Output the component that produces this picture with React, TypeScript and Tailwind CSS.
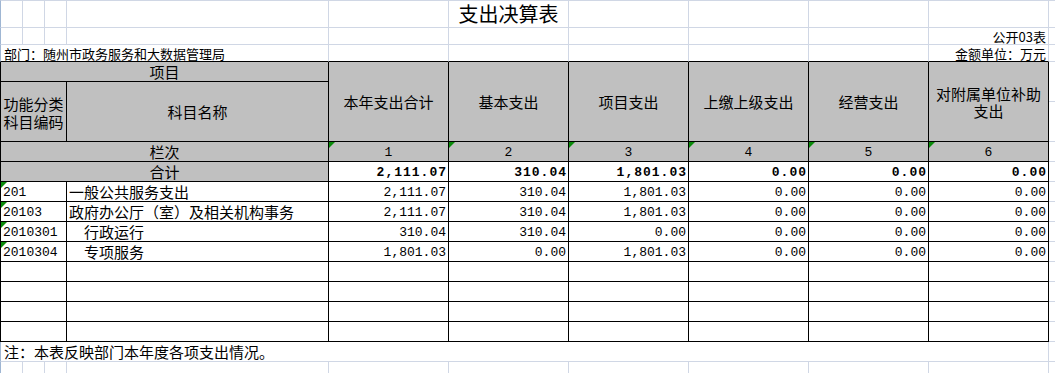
import React from 'react'

const CJK = "font-['Noto_Sans_CJK_SC','Noto_Sans',sans-serif]"
const MONO = "font-['Liberation_Mono','DejaVu_Sans_Mono',monospace]"

// column widths A..J (A includes the sheet's left border)
const colW = [
  'w-[23px]',
  'w-[22px]',
  'w-[22px]',
  'w-[262px]',
  'w-[120px]',
  'w-[120px]',
  'w-[120px]',
  'w-[120px]',
  'w-[120px]',
  'w-[120px]',
]

const heads = ['本年支出合计', '基本支出', '项目支出', '上缴上级支出', '经营支出']

const rows = [
  { code: '201', name: '一般公共服务支出', indent: false, vals: ['2,111.07', '310.04', '1,801.03', '0.00', '0.00', '0.00'] },
  { code: '20103', name: '政府办公厅（室）及相关机构事务', indent: false, vals: ['2,111.07', '310.04', '1,801.03', '0.00', '0.00', '0.00'] },
  { code: '2010301', name: '行政运行', indent: true, vals: ['310.04', '310.04', '0.00', '0.00', '0.00', '0.00'] },
  { code: '2010304', name: '专项服务', indent: true, vals: ['1,801.03', '0.00', '1,801.03', '0.00', '0.00', '0.00'] },
]

const totals = ['2,111.07', '310.04', '1,801.03', '0.00', '0.00', '0.00']

const Tri = () => (
  <svg className="absolute left-0 top-0" width="6" height="6" viewBox="0 0 6 6">
    <polygon points="0,0 6,0 0,6" fill="#0a8a0a" />
  </svg>
)

const Margin = ({ h }: { h: string }) => (
  <div className={`flex-1 ${h} border-b border-[#d0d7e5]`} />
)

export default function App() {
  return (
    <div className={`w-[1055px] h-[373px] overflow-hidden bg-white text-black ${CJK}`}>
      {/* row 1: title */}
      <div className="flex h-[28px]">
        {colW.map((w, i) => (
          <div
            key={i}
            className={`${w} h-full border-t border-b border-r border-[#d0d7e5] ${i === 0 ? 'border-l border-l-[#9fb6d3]' : ''} flex items-center justify-center`}
          >
            {i === 5 && <span className="text-[20px] leading-none whitespace-nowrap">支出决算表</span>}
          </div>
        ))}
        <div className="flex-1 border-t border-b border-[#d0d7e5]" />
      </div>

      {/* row 2 */}
      <div className="flex h-[17px]">
        {colW.map((w, i) => (
          <div
            key={i}
            className={`${w} h-full border-b border-r border-[#d0d7e5] ${i === 0 ? 'border-l border-l-[#9fb6d3]' : ''} flex items-center justify-end pr-[2px]`}
          >
            {i === 9 && <span className="text-[13px] leading-none whitespace-nowrap">公开03表</span>}
          </div>
        ))}
        <Margin h="h-full" />
      </div>

      {/* row 3 */}
      <div className="flex h-[17px]">
        <div className="w-[329px] h-full border-l border-l-[#9fb6d3] border-r border-r-[#d0d7e5] border-b border-b-black flex items-center pl-[3px]">
          <span className="text-[13px] leading-none whitespace-nowrap">部门：随州市政务服务和大数据管理局</span>
        </div>
        {colW.slice(4).map((w, i) => (
          <div
            key={i}
            className={`${w} h-full border-r border-r-[#d0d7e5] border-b border-b-black flex items-center justify-end pr-[2px]`}
          >
            {i === 5 && <span className="text-[13px] leading-none whitespace-nowrap">金额单位：万元</span>}
          </div>
        ))}
        <Margin h="h-full" />
      </div>

      {/* header block */}
      <div className="flex h-[80px] text-[15px]">
        <div className="w-[329px] flex flex-col bg-[#c0c0c0]">
          <div className="h-[20px] border-l border-r border-b border-black flex items-center justify-center leading-none">
            项目
          </div>
          <div className="flex h-[60px]">
            <div className="w-[67px] border-l border-r border-b border-black flex flex-col items-center justify-center gap-[3px] pt-[1px] leading-none">
              <span>功能分类</span>
              <span>科目编码</span>
            </div>
            <div className="w-[262px] border-r border-b border-black flex items-center justify-center leading-none">
              科目名称
            </div>
          </div>
        </div>
        {heads.map((h) => (
          <div
            key={h}
            className="w-[120px] h-full bg-[#c0c0c0] border-r border-b border-black flex items-center justify-center leading-none"
          >
            {h}
          </div>
        ))}
        <div className="w-[120px] h-full bg-[#c0c0c0] border-r border-b border-black flex flex-col items-center justify-center gap-[2px] leading-none">
          <span>对附属单位补助</span>
          <span>支出</span>
        </div>
        <div className="flex-1 flex flex-col">
          <Margin h="h-[20px]" />
          <Margin h="h-[60px]" />
        </div>
      </div>

      {/* 栏次 */}
      <div className="flex h-[20px]">
        <div className="w-[329px] h-full bg-[#c0c0c0] border-l border-r border-b border-black flex items-center justify-center text-[15px] leading-none">
          栏次
        </div>
        {[1, 2, 3, 4, 5, 6].map((n) => (
          <div
            key={n}
            className={`relative w-[120px] h-full bg-[#c0c0c0] border-r border-b border-black flex items-center justify-center pt-[1px] text-[13px] leading-none ${MONO}`}
          >
            <Tri />
            {n}
          </div>
        ))}
        <Margin h="h-full" />
      </div>

      {/* 合计 */}
      <div className="flex h-[20px]">
        <div className="w-[329px] h-full bg-[#c0c0c0] border-l border-r border-b border-black flex items-center justify-center text-[15px] leading-none">
          合计
        </div>
        {totals.map((v, i) => (
          <div
            key={i}
            className={`w-[120px] h-full border-r border-b border-black flex items-center justify-end pr-[1px] pt-[1px] text-[13px] font-bold tracking-[1px] leading-none ${MONO}`}
          >
            {v}
          </div>
        ))}
        <Margin h="h-full" />
      </div>

      {/* data rows */}
      {rows.map((r) => (
        <div key={r.code} className="flex h-[20px]">
          <div className={`relative w-[67px] h-full border-l border-r border-b border-black flex items-center pl-[2px] pt-[1px] text-[13px] leading-none ${MONO}`}>
            <Tri />
            {r.code}
          </div>
          <div className={`w-[262px] h-full border-r border-b border-black flex items-center text-[15px] leading-none whitespace-nowrap ${r.indent ? 'pl-[17px]' : 'pl-[2px]'}`}>
            {r.name}
          </div>
          {r.vals.map((v, i) => (
            <div
              key={i}
              className={`w-[120px] h-full border-r border-b border-black flex items-center justify-end pr-[2px] pt-[1px] text-[13px] leading-none ${MONO}`}
            >
              {v}
            </div>
          ))}
          <Margin h="h-full" />
        </div>
      ))}

      {/* empty rows */}
      {[0, 1, 2, 3].map((k) => (
        <div key={k} className="flex h-[20px]">
          <div className="w-[67px] h-full border-l border-r border-b border-black" />
          <div className="w-[262px] h-full border-r border-b border-black" />
          {[0, 1, 2, 3, 4, 5].map((i) => (
            <div key={i} className="w-[120px] h-full border-r border-b border-black" />
          ))}
          <Margin h="h-full" />
        </div>
      ))}

      {/* note */}
      <div className="flex h-[20px]">
        <div className="w-[1049px] h-full border-l border-l-[#9fb6d3] border-r border-b border-[#d0d7e5] flex items-center pl-[3px] text-[15px] leading-none whitespace-nowrap">
          注：本表反映部门本年度各项支出情况。
        </div>
        <Margin h="h-full" />
      </div>

      {/* trailing empty sheet row */}
      <div className="flex h-[11px]">
        {colW.map((w, i) => (
          <div
            key={i}
            className={`${w} h-full border-r border-[#d0d7e5] ${i === 0 ? 'border-l border-l-[#9fb6d3]' : ''}`}
          />
        ))}
        <div className="flex-1" />
      </div>
    </div>
  )
}
